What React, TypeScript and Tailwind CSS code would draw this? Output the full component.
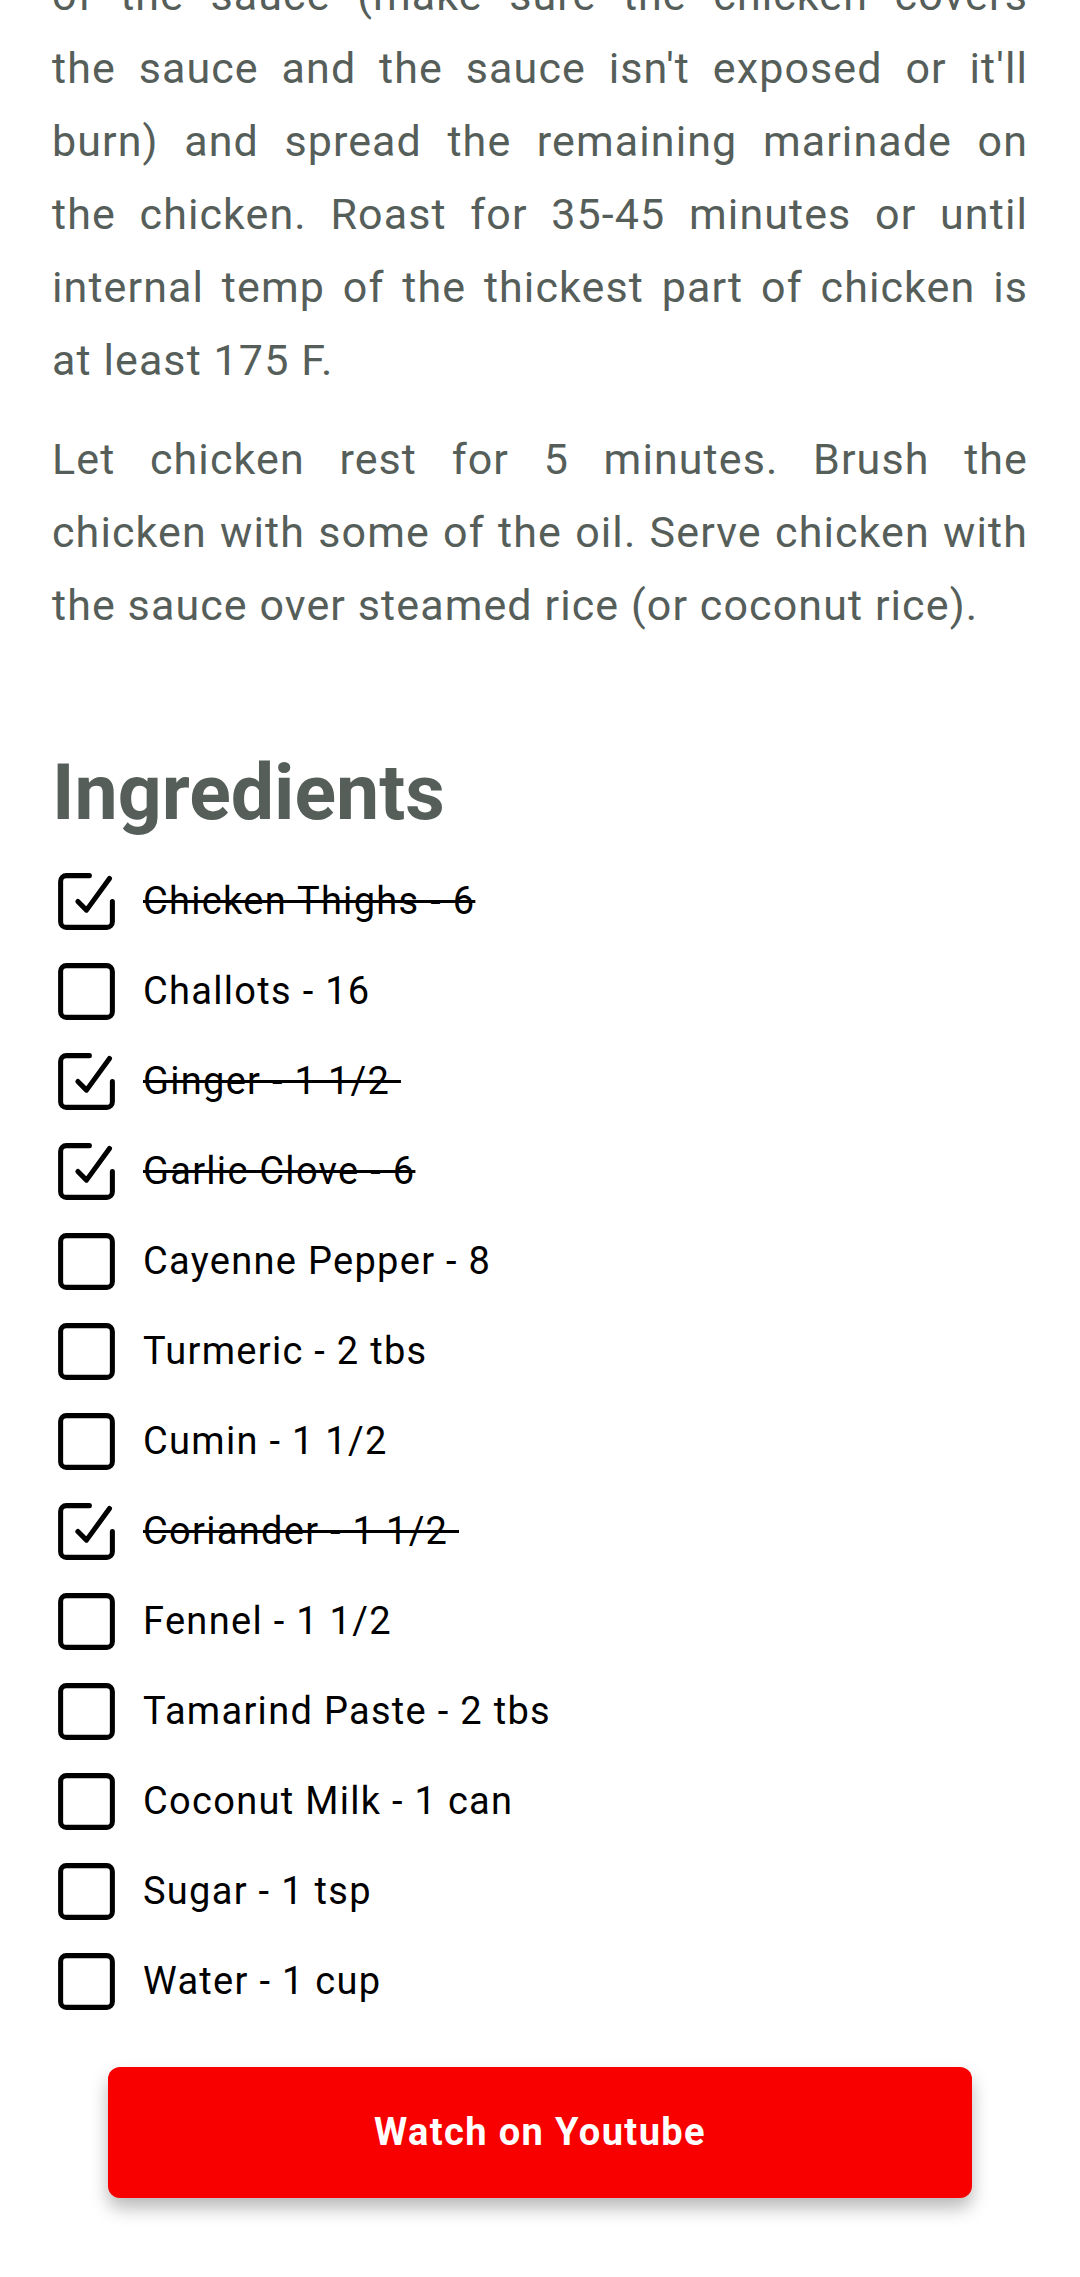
import React, { useState } from 'react';

type Ingredient = { name: string; done: boolean };

const initialIngredients: Ingredient[] = [
  { name: 'Chicken Thighs - 6', done: true },
  { name: 'Challots - 16', done: false },
  { name: 'Ginger - 1 1/2 ', done: true },
  { name: 'Garlic Clove - 6', done: true },
  { name: 'Cayenne Pepper - 8', done: false },
  { name: 'Turmeric - 2 tbs', done: false },
  { name: 'Cumin - 1 1/2', done: false },
  { name: 'Coriander - 1 1/2 ', done: true },
  { name: 'Fennel - 1 1/2', done: false },
  { name: 'Tamarind Paste - 2 tbs', done: false },
  { name: 'Coconut Milk - 1 can', done: false },
  { name: 'Sugar - 1 tsp', done: false },
  { name: 'Water - 1 cup', done: false },
];

// the step text, broken where the original app wraps it
const stepOne = [
  'of the sauce (make sure the chicken covers',
  "the sauce and the sauce isn't exposed or it'll",
  'burn) and spread the remaining marinade on',
  'the chicken. Roast for 35-45 minutes or until',
  'internal temp of the thickest part of chicken is',
  'at least 175 F.',
];

const stepTwo = [
  'Let chicken rest for 5 minutes. Brush the',
  'chicken with some of the oil. Serve chicken with',
  'the sauce over steamed rice (or coconut rice).',
];

const Step = ({ lines, className = '' }: { lines: string[]; className?: string }) => (
  <p className={`text-[43px] leading-[73px] tracking-[1.1px] text-[#565e5a] ${className}`}>
    {lines.map((line, i) => (
      <span
        key={i}
        className={`block whitespace-nowrap ${i < lines.length - 1 ? 'text-justify [text-align-last:justify]' : ''}`}
      >
        {line}
      </span>
    ))}
  </p>
);

const CheckIcon = ({ checked }: { checked: boolean }) => (
  <svg
    viewBox="0 0 24 24"
    className="w-[69px] h-[69px] shrink-0"
    fill="none"
    stroke="#000"
    strokeWidth={1.75}
    strokeLinecap="round"
    strokeLinejoin="round"
  >
    {checked ? (
      <>
        <path d="M9 12l3 3 8-11" />
        <path d="M21 12v7a2 2 0 0 1-2 2H5a2 2 0 0 1-2-2V5a2 2 0 0 1 2-2h8" />
      </>
    ) : (
      <rect x="3" y="3" width="18" height="18" rx="2" />
    )}
  </svg>
);

export default function App() {
  const [items, setItems] = useState(initialIngredients);

  const toggle = (idx: number) =>
    setItems(prev => prev.map((it, i) => (i === idx ? { ...it, done: !it.done } : it)));

  return (
    <div className="min-h-[2277px] bg-white overflow-hidden font-['Roboto','Liberation_Sans',sans-serif]">
      <div className="px-[52px] mt-[-41px]">
        <Step lines={stepOne} />
        <Step lines={stepTwo} className="mt-[26px]" />

        <h2 className="mt-[113px] text-[77px] leading-none font-bold text-[#565e5a]">Ingredients</h2>

        <ul className="mt-[24px]">
          {items.map((item, idx) => (
            <li
              key={item.name}
              onClick={() => toggle(idx)}
              className="h-[90px] flex items-center gap-[22px] cursor-pointer"
            >
              <CheckIcon checked={item.done} />
              <span
                className={`text-[38px] tracking-[1.3px] text-black whitespace-pre ${item.done ? 'line-through' : ''}`}
              >
                {item.name}
              </span>
            </li>
          ))}
        </ul>

        <button className="mt-[41px] mx-auto flex items-center justify-center w-[864px] h-[131px] rounded-[12px] bg-[#f90000] text-white text-[38px] tracking-[1.4px] font-bold shadow-[0_10px_18px_rgba(0,0,0,0.28)]">
          Watch on Youtube
        </button>
      </div>
    </div>
  );
}
